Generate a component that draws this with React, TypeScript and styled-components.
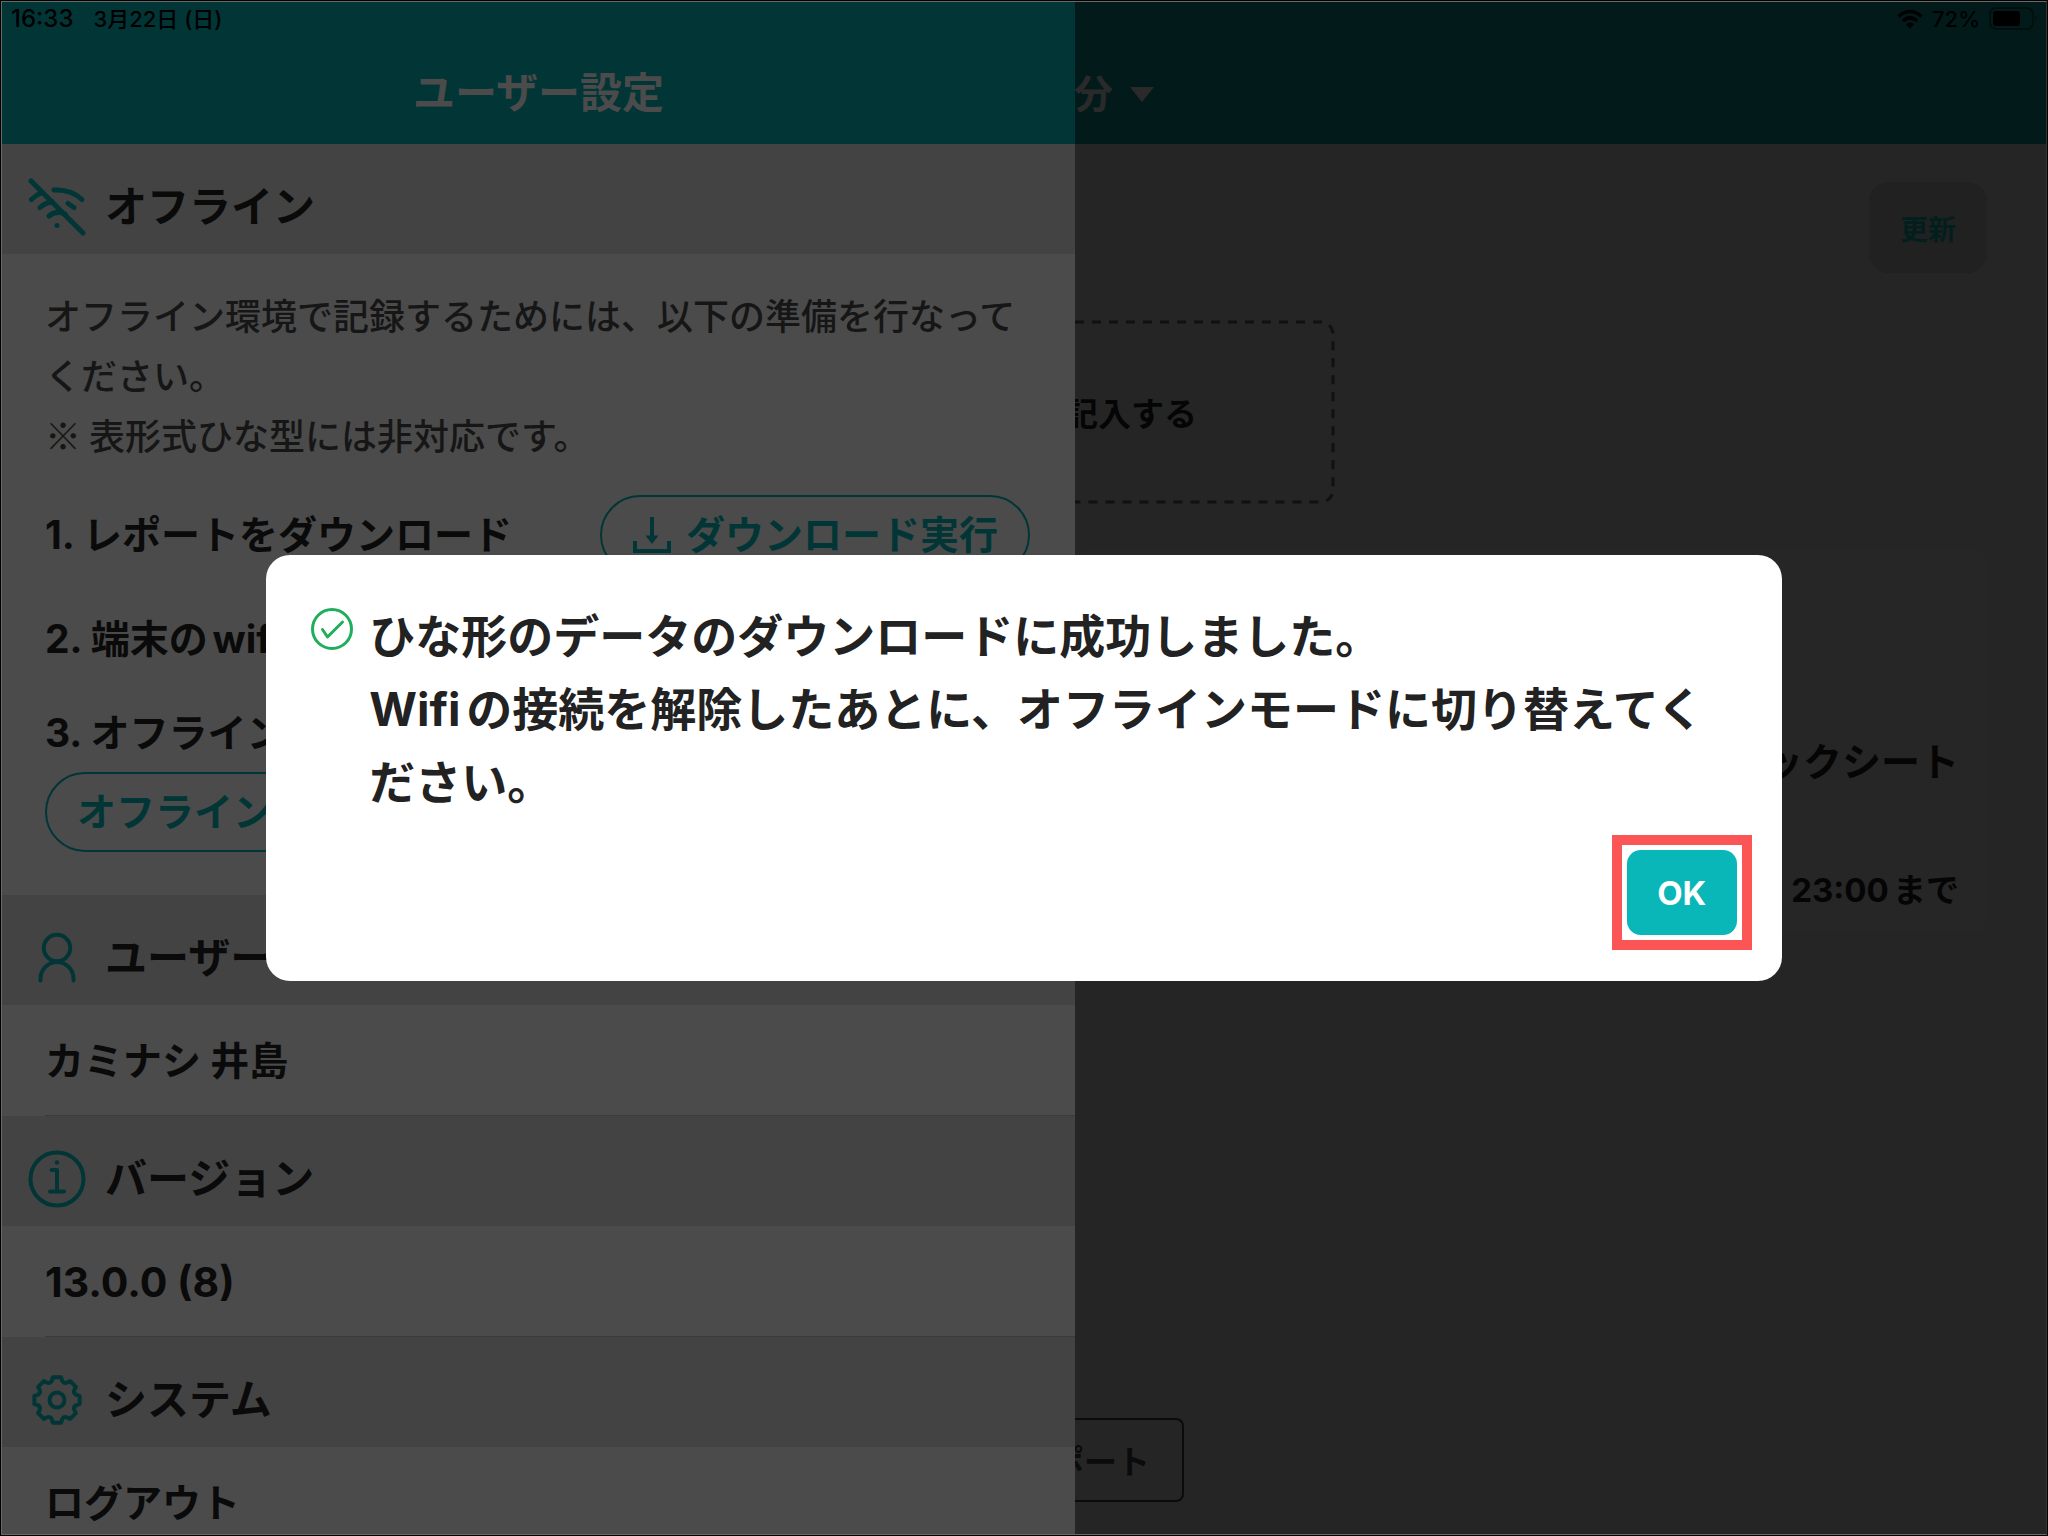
import React from "react";
import styled, { createGlobalStyle } from "styled-components";

const teal = "#023636";
const ink = "#0a0a0a";

const GlobalStyle = createGlobalStyle`
  *, *::before, *::after { box-sizing: border-box; }
  body {
    margin: 0;
    background: #000;
    font-family: Inter, "Noto Sans CJK JP", sans-serif;
  }
  h1, h2, p, ol, ul { margin: 0; padding: 0; font-weight: inherit; }
  ol, ul { list-style: none; }
  button { font-family: inherit; margin: 0; cursor: pointer; }
`;

const Screen = styled.div`
  height: 100vh;
  border: 1px solid #000;
  overflow: hidden;
`;

const Frame = styled.div`
  height: 100%;
  display: flex;
  border: 1px solid #686868;
  border-right-color: #343434;
  overflow: hidden;
`;

const Drawer = styled.aside`
  flex: 0 0 52.5%;
  display: flex;
  flex-direction: column;
  overflow: hidden;
  background: #4b4b4b;
  color: ${ink};
`;

const Main = styled.main`
  flex: 1;
  min-width: 0;
  display: flex;
  flex-direction: column;
  overflow: hidden;
  background: #252525;
  color: #050505;
`;

const TopBar = styled.header<{ $dim?: boolean }>`
  flex: 0 0 142px;
  display: flex;
  flex-direction: column;
  background: ${(p) => (p.$dim ? "#021b1a" : teal)};
  color: ${(p) => (p.$dim ? "#2a2a2a" : "#4b4b4b")};
`;

const StatusBar = styled.div<{ $end?: boolean }>`
  height: 34px;
  display: flex;
  align-items: center;
  justify-content: ${(p) => (p.$end ? "flex-end" : "flex-start")};
  gap: ${(p) => (p.$end ? "9px" : "20px")};
  padding: 0 9px;
  color: #000;
  font-size: 22px;
  line-height: 34px;
  font-weight: 500;
`;

const Clock = styled.time`
  font-size: 24px;
`;

const DrawerTitle = styled.h1`
  padding-top: 27px;
  line-height: 60px;
  text-align: center;
  font-size: 42px;
  font-weight: 700;
`;

const DateButton = styled.button`
  height: 60px;
  margin-top: 28px;
  padding: 0;
  border: 0;
  background: none;
  color: inherit;
  display: flex;
  align-items: center;
  gap: 16px;
  font-size: 39px;
  line-height: 60px;
  font-weight: 700;
`;

const EndClip = styled.span<{ $w: number }>`
  width: ${(p) => p.$w}px;
  display: flex;
  justify-content: flex-end;
  white-space: nowrap;
`;

const SectionHead = styled.h2`
  flex: 0 0 110px;
  display: flex;
  align-items: center;
  gap: 19px;
  padding: 16px 26px 0;
  background: #434343;
  font-size: 42px;
  line-height: 60px;
  font-weight: 700;
`;

const SectionIcon = styled.svg`
  width: 58px;
  height: 58px;
  flex: none;
  fill: none;
  stroke: ${teal};
  stroke-width: 5;
  stroke-linecap: round;
  stroke-linejoin: round;
`;

const Offline = styled.section`
  flex: none;
  padding: 30px 45px 43px 43px;
`;

const Guide = styled.p`
  color: #161616;
  font-family: "Noto Sans CJK JP", sans-serif;
  font-size: 36px;
  line-height: 60px;
  font-weight: 500;
`;

const Steps = styled.ol`
  display: flex;
  flex-direction: column;
  gap: 34px;
  margin-top: 31px;
  font-size: 39px;
  line-height: 60px;
  font-weight: 700;
  text-autospace: normal;
`;

const Step = styled.li<{ $stack?: boolean }>`
  display: flex;
  flex-direction: ${(p) => (p.$stack ? "column" : "row")};
  align-items: ${(p) => (p.$stack ? "flex-start" : "center")};
  justify-content: space-between;
  gap: 9px;
`;

const PillButton = styled.button<{ $wide?: boolean }>`
  height: 80px;
  min-width: ${(p) => (p.$wide ? "430px" : "0")};
  display: flex;
  align-items: center;
  gap: 14px;
  padding: 0 30px;
  border: 2px solid ${teal};
  border-radius: 40px;
  background: transparent;
  color: ${teal};
  font-size: 39px;
  line-height: 60px;
  font-weight: 700;
`;

const InfoRow = styled.div`
  flex: 0 0 111px;
  padding-left: 43px;
`;

const InfoText = styled.p<{ $numeric?: boolean }>`
  height: 111px;
  border-bottom: 1px solid #3b3b3b;
  font-size: ${(p) => (p.$numeric ? "41px" : "39px")};
  line-height: 112px;
  font-weight: 700;
`;

const LogoutButton = styled.button`
  display: block;
  width: 100%;
  height: 111px;
  padding: 0;
  border: 0;
  background: none;
  color: inherit;
  text-align: left;
  font-size: 39px;
  line-height: 110px;
  font-weight: 700;
`;

const MainBody = styled.div`
  flex: 1;
  display: flex;
  flex-direction: column;
  align-items: flex-start;
  padding: 38px 59px 32px 0;
`;

const RefreshButton = styled.button`
  align-self: flex-end;
  width: 118px;
  height: 91px;
  padding: 0;
  border: 0;
  border-radius: 20px;
  background: #212121;
  color: #021f1e;
  font-size: 28px;
  font-weight: 700;
`;

const EntryButton = styled.button`
  position: relative;
  width: 260px;
  height: 184px;
  margin-top: 47px;
  padding: 0 138px 0 0;
  border: 0;
  background: none;
  color: inherit;
  font-size: 33px;
  font-weight: 700;
`;

const DashedEdge = styled.svg`
  position: absolute;
  top: 0;
  right: 0;
  width: 276px;
  height: 184px;
`;

const SheetCard = styled.article`
  align-self: stretch;
  height: 384px;
  margin-top: 45px;
  padding: 0 28px 13px;
  display: flex;
  flex-direction: column;
  justify-content: flex-end;
  align-items: flex-end;
  gap: 68px;
  border-radius: 12px;
  background: #262626;
  font-weight: 700;
  text-autospace: normal;
`;

const SheetName = styled.h2`
  font-size: 39px;
  line-height: 60px;
  font-weight: 700;
`;

const SheetDue = styled.p`
  font-size: 33px;
  line-height: 60px;
`;

const ReportButton = styled.button`
  width: 109px;
  height: 84px;
  margin-top: auto;
  padding: 0 32px 0 0;
  border: 2px solid #0a0b0b;
  border-left: 0;
  border-radius: 0 8px 8px 0;
  background: none;
  color: #090b0c;
  font-size: 33px;
  font-weight: 700;
`;

const ModalLayer = styled.div`
  position: fixed;
  inset: 0;
  display: flex;
  align-items: center;
  justify-content: center;
`;

const Dialog = styled.div`
  width: 74%;
  display: flex;
  flex-direction: column;
  padding: 45px 45px 46px;
  border-radius: 24px;
  background: #fff;
  color: #222;
`;

const Message = styled.div`
  display: flex;
  gap: 16px;
  font-size: 46px;
  line-height: 73px;
  font-weight: 700;
  text-autospace: normal;
`;

const CheckIcon = styled.svg`
  flex: none;
  width: 42px;
  height: 42px;
  margin-top: 8px;
  fill: none;
  stroke: #1fae5b;
  stroke-width: 3;
  stroke-linecap: round;
  stroke-linejoin: round;
`;

const Highlight = styled.div`
  align-self: flex-end;
  margin-top: 31px;
  outline: 10px solid #fb5555;
  outline-offset: 5px;
`;

const OkButton = styled.button`
  display: block;
  width: 110px;
  height: 85px;
  padding: 0;
  border: 0;
  border-radius: 14px;
  background: #09b6b8;
  color: #fff;
  font-size: 33px;
  font-weight: 700;
`;

function gearPath() {
  const pts: string[] = [];
  for (let i = 0; i < 8; i++) {
    const base = (i * Math.PI) / 4 - Math.PI / 2;
    const at = (r: number, a: number) =>
      `${(29 + r * Math.cos(base + a)).toFixed(2)} ${(29 + r * Math.sin(base + a)).toFixed(2)}`;
    pts.push(
      `${i === 0 ? "M" : "L"}${at(20, -0.26)} L${at(23, -0.18)} L${at(23, 0.18)} L${at(20, 0.26)}`,
      `Q${at(17.5, Math.PI / 8)} ${at(20, Math.PI / 4 - 0.26)}`
    );
  }
  return `${pts.join(" ")} Z`;
}

const caret = (
  <svg width="26" height="15" viewBox="0 0 26 15" aria-hidden="true">
    <path d="M1 0h24L13 15z" fill="#2a2a2a" />
  </svg>
);

export default function App() {
  return (
    <>
      <GlobalStyle />
      <Screen>
        <Frame>
          <Drawer>
            <TopBar>
              <StatusBar>
                <Clock>16:33</Clock>
                <span>3月22日 (日)</span>
              </StatusBar>
              <DrawerTitle>ユーザー設定</DrawerTitle>
            </TopBar>

            <SectionHead>
              <SectionIcon viewBox="0 0 58 58" aria-hidden="true">
                <path d="M3 3L55 55" />
                <path d="M3.500 21.500Q8 17 14 14.500" />
                <path d="M26 12Q43 11 54 21.500" />
                <path d="M12 29.500Q17 25 24 23.500" />
                <path d="M40 25.500L46 29.500" />
                <path d="M21 38Q28 32 37 36" />
                <circle cx="29" cy="47.500" r="2.500" fill={teal} stroke="none" />
              </SectionIcon>
              オフライン
            </SectionHead>
            <Offline>
              <Guide>
                オフライン環境で記録するためには、以下の準備を行なってください。
                <br />※ 表形式ひな型には非対応です。
              </Guide>
              <Steps>
                <Step>
                  <span>1. レポートをダウンロード</span>
                  <PillButton>
                    <svg width="40" height="38" viewBox="0 0 40 38" fill="none" stroke={teal} strokeWidth="4" aria-hidden="true">
                      <path d="M20 1V22" />
                      <path d="M13.500 19.500h13L20 28z" fill={teal} stroke="none" />
                      <path d="M3 25V35H37V25" />
                    </svg>
                    ダウンロード実行
                  </PillButton>
                </Step>
                <Step>
                  <span>2. 端末のwifi</span>
                </Step>
                <Step $stack>
                  <span>3. オフライン</span>
                  <PillButton $wide>オフライン</PillButton>
                </Step>
              </Steps>
            </Offline>

            <SectionHead>
              <SectionIcon viewBox="0 0 58 58" aria-hidden="true">
                <circle cx="29" cy="19" r="13.200" strokeWidth="4" />
                <path d="M12.500 51.500V50A16.500 17 0 0 1 45.500 50V51.500" strokeWidth="4" />
              </SectionIcon>
              ユーザー
            </SectionHead>
            <InfoRow>
              <InfoText>カミナシ 井島</InfoText>
            </InfoRow>

            <SectionHead>
              <SectionIcon viewBox="0 0 58 58" aria-hidden="true">
                <circle cx="29" cy="29" r="26.500" strokeWidth="4" />
                <circle cx="29" cy="12.500" r="2.200" fill={teal} stroke="none" />
                <path d="M23.500 20H29V41.500M22 41.500H36" strokeWidth="4" />
              </SectionIcon>
              バージョン
            </SectionHead>
            <InfoRow>
              <InfoText $numeric>13.0.0 (8)</InfoText>
            </InfoRow>

            <SectionHead>
              <SectionIcon viewBox="0 0 58 58" aria-hidden="true">
                <path d={gearPath()} strokeWidth="4" />
                <circle cx="29" cy="29" r="7.500" strokeWidth="4" />
              </SectionIcon>
              システム
            </SectionHead>
            <InfoRow>
              <LogoutButton>ログアウト</LogoutButton>
            </InfoRow>
          </Drawer>

          <Main>
            <TopBar $dim>
              <StatusBar $end>
                <svg width="26" height="20" viewBox="0 0 26 20" aria-hidden="true">
                  <g fill="none" stroke="#000" strokeWidth="3.600">
                    <path d="M1.500 7.500Q13-2.500 24.500 7.500" />
                    <path d="M5.800 12Q13 5.500 20.200 12" />
                  </g>
                  <path d="M9 15.200Q13 11.800 17 15.200L13 19.500z" />
                </svg>
                <span>72%</span>
                <svg width="48" height="24" viewBox="0 0 48 24" aria-hidden="true">
                  <rect x="1" y="1" width="43" height="21" rx="6" fill="none" stroke="#01100f" strokeWidth="2" />
                  <rect x="4" y="4" width="27" height="15" rx="3" />
                  <path d="M46 8q2 3.500 0 7z" fill="#01100f" />
                </svg>
              </StatusBar>
              <DateButton>
                <EndClip $w={38}>分</EndClip>
                {caret}
              </DateButton>
            </TopBar>
            <MainBody>
              <RefreshButton>更新</RefreshButton>
              <EntryButton>
                <DashedEdge aria-hidden="true">
                  <rect
                    x="-30"
                    y="2"
                    width="304"
                    height="180"
                    rx="12"
                    fill="none"
                    stroke="#111"
                    strokeWidth="3"
                    strokeDasharray="9 8"
                  />
                </DashedEdge>
                <EndClip $w={122}>記入する</EndClip>
              </EntryButton>
              <SheetCard>
                <SheetName>ックシート</SheetName>
                <SheetDue>23:00まで</SheetDue>
              </SheetCard>
              <ReportButton>
                <EndClip $w={75}>ポート</EndClip>
              </ReportButton>
            </MainBody>
          </Main>
        </Frame>
      </Screen>

      <ModalLayer>
        <Dialog role="alertdialog" aria-modal="true" aria-labelledby="message">
          <Message>
            <CheckIcon viewBox="0 0 42 42" aria-hidden="true">
              <circle cx="21" cy="21" r="19.500" />
              <path d="M11.500 21.500L16.500 29L31.500 14" />
            </CheckIcon>
            <p id="message">
              ひな形のデータのダウンロードに成功しました。
              <br />
              Wifiの接続を解除したあとに、オフラインモードに切り替えてください。
            </p>
          </Message>
          <Highlight>
            <OkButton>OK</OkButton>
          </Highlight>
        </Dialog>
      </ModalLayer>
    </>
  );
}
